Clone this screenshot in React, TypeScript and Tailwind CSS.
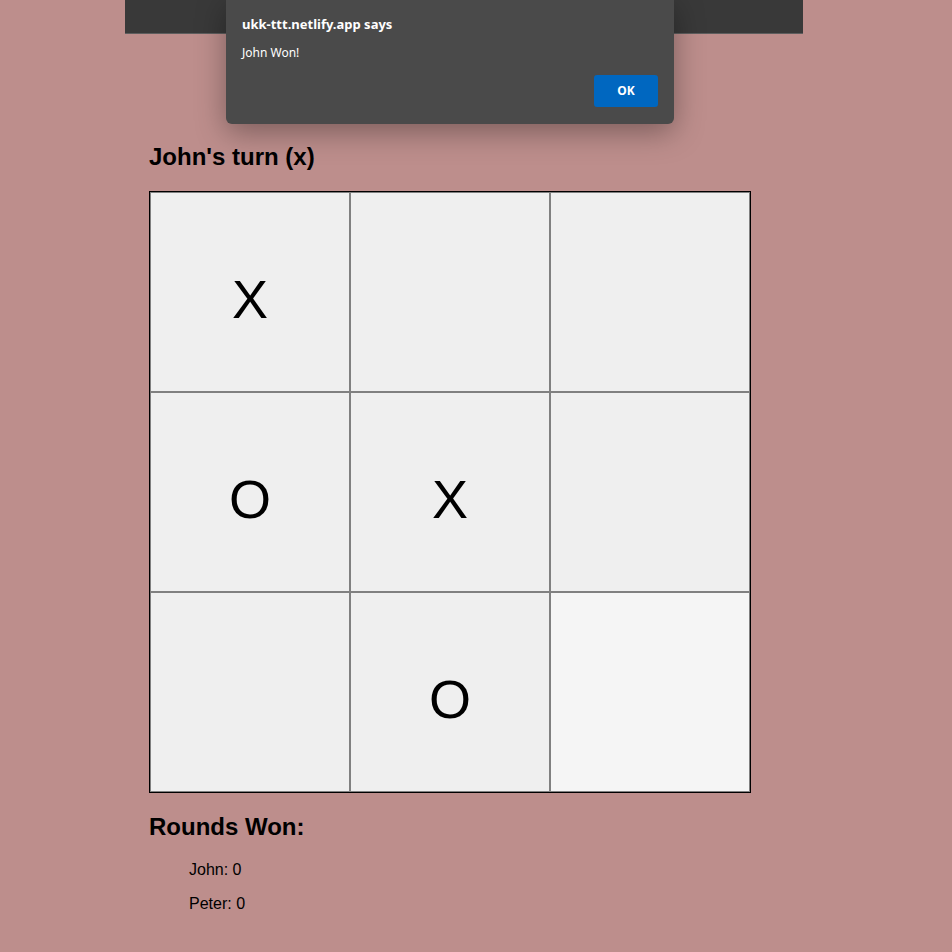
import { useState } from 'react'

type Mark = 'X' | 'O' | ''

const initialBoard: Mark[] = ['X', '', '', 'O', 'X', '', '', 'O', '']

function Cell({ value, hot }: { value: Mark; hot?: boolean }) {
  return (
    <div
      className={`flex h-[200px] w-[200px] items-center justify-center border border-[#808080] pt-[14px] text-[54px] leading-[normal] text-black ${
        hot ? 'bg-[#f5f5f5]' : 'bg-[#efefef]'
      }`}
    >
      {value}
    </div>
  )
}

function AlertDialog() {
  return (
    <div className="absolute left-[226px] top-0 flex h-[124px] w-[448px] flex-col rounded-b-[6px] bg-[#4a4a4a] px-4 pt-[14px] text-white shadow-[0_8px_30px_rgba(0,0,0,0.35)] [font-family:'Noto_Sans','Open_Sans',sans-serif]">
      <p className="text-[13px] font-bold leading-[20px]">ukk-ttt.netlify.app says</p>
      <p className="mt-[9px] text-[12px] leading-[20px]">John Won!</p>
      <div className="mt-auto mb-[17px] flex justify-end">
        <button className="h-[32px] w-[64px] rounded-[3px] bg-[#0067c0] text-[12px] font-bold text-white">
          OK
        </button>
      </div>
    </div>
  )
}

export default function App() {
  const [board] = useState<Mark[]>(initialBoard)

  return (
    <div className="relative min-h-[952px] bg-[#bd8e8c] [font-family:'Liberation_Sans',Arial,sans-serif]">
      <div className="ml-[125px] h-[34px] w-[678px] border-b border-[#5e5e5e] bg-[#393939]" />

      <div className="ml-[149px]">
        <h2 className="mt-[109px] text-[24px] font-bold leading-[normal] text-black">John's turn (x)</h2>

        <div className="mt-[20px] grid w-[602px] grid-cols-3 border border-black">
          {board.map((v, i) => (
            <Cell key={i} value={v} hot={i === 8} />
          ))}
        </div>

        <h2 className="mt-[20px] text-[24px] font-bold leading-[normal] text-black">Rounds Won:</h2>
        <div className="mt-[20px] flex flex-col gap-[15.5px] pl-[40px] text-[16px] leading-[normal] text-black">
          <p>John: 0</p>
          <p>Peter: 0</p>
        </div>
      </div>

      <AlertDialog />
    </div>
  )
}
